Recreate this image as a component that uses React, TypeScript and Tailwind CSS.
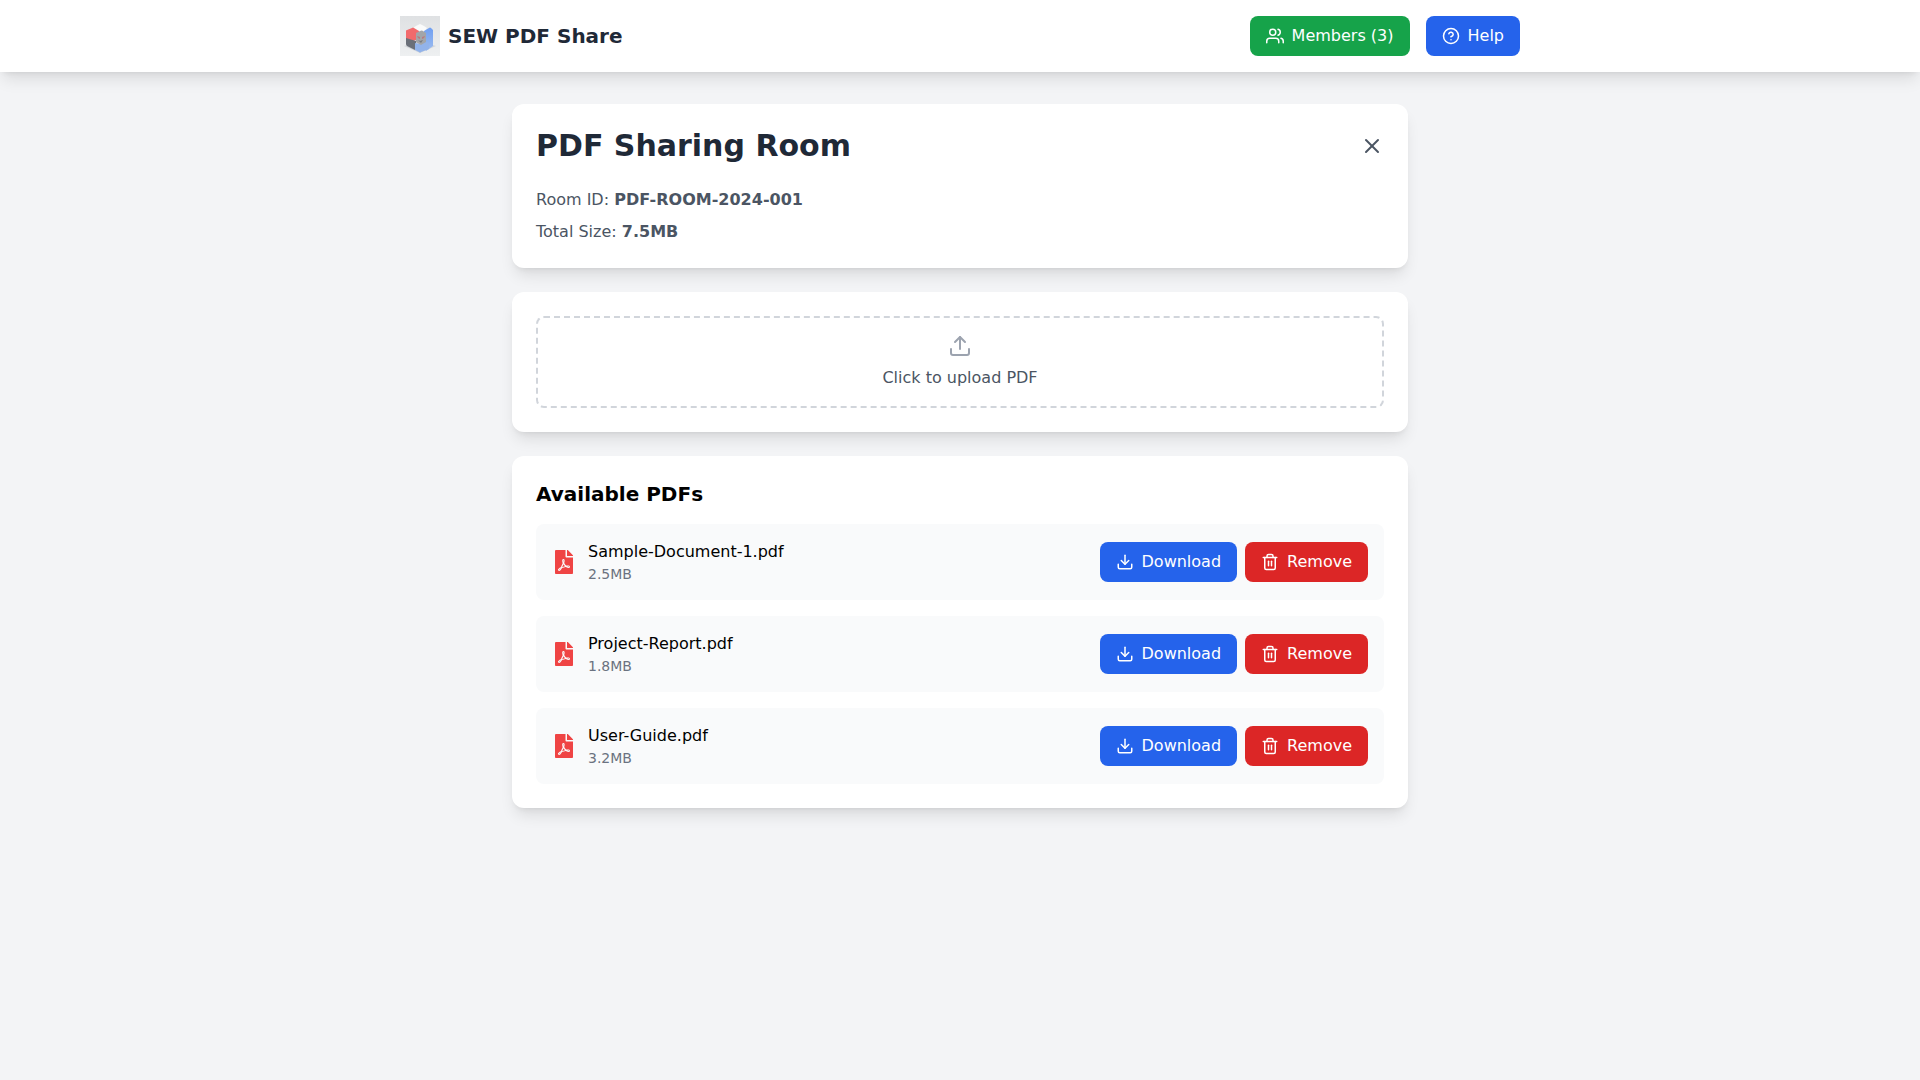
import { useRef } from "react";
import { FaFilePdf } from "react-icons/fa";
import {
  FiDownload,
  FiHelpCircle,
  FiTrash2,
  FiUpload,
  FiUsers,
  FiX,
} from "react-icons/fi";

const PDFS = [
  { name: "Sample-Document-1.pdf", size: "2.5MB" },
  { name: "Project-Report.pdf", size: "1.8MB" },
  { name: "User-Guide.pdf", size: "3.2MB" },
];

export default function App() {
  return (
    <div className="min-h-screen bg-[#f3f4f6] font-['DejaVu_Sans',sans-serif] text-base text-black">
      <Header />
      <main className="max-w-4xl mx-auto py-8 flex flex-col gap-6">
        <RoomInfo />
        <UploadBox />
        <PdfList />
      </main>
    </div>
  );
}

const Header = () => {
  return (
    <header className="bg-white shadow-lg">
      <div className="max-w-6xl mx-auto px-4 py-4 flex justify-between items-center">
        <div className="flex items-center gap-2">
          <Logo />
          <span className="text-xl font-bold text-[#1f2937]">SEW PDF Share</span>
        </div>
        <div className="flex items-center gap-4">
          <button className="flex items-center gap-2 px-4 py-2 rounded-lg bg-[#16a34a] text-white">
            <FiUsers size={18} />
            Members (3)
          </button>
          <button className="flex items-center gap-2 px-4 py-2 rounded-lg bg-[#2563eb] text-white">
            <FiHelpCircle size={18} />
            Help
          </button>
        </div>
      </div>
    </header>
  );
};

const RoomInfo = () => {
  return (
    <section className="bg-white rounded-xl shadow-lg p-6">
      <div className="flex justify-between items-center mb-6">
        <h1 className="text-3xl font-bold text-[#1f2937]">PDF Sharing Room</h1>
        <button aria-label="Close room" className="text-[#4b5563]">
          <FiX size={24} />
        </button>
      </div>
      <div className="space-y-2 text-[#4b5563]">
        <p>
          Room ID: <span className="font-bold">PDF-ROOM-2024-001</span>
        </p>
        <p>
          Total Size: <span className="font-bold">7.5MB</span>
        </p>
      </div>
    </section>
  );
};

const UploadBox = () => {
  const inputRef = useRef<HTMLInputElement>(null);

  return (
    <section className="bg-white rounded-xl shadow-lg p-6">
      <input
        ref={inputRef}
        type="file"
        accept=".pdf"
        aria-label="PDF file"
        className="hidden"
      />
      <button
        onClick={() => inputRef.current?.click()}
        className="w-full p-4 flex flex-col items-center gap-2 border-2 border-dashed border-[#d1d5db] rounded-lg"
      >
        <FiUpload size={24} className="text-[#9ca3af]" />
        <span className="text-[#4b5563]">Click to upload PDF</span>
      </button>
    </section>
  );
};

const PdfList = () => {
  return (
    <section className="bg-white rounded-xl shadow-lg p-6">
      <h2 className="text-xl font-bold mb-4">Available PDFs</h2>
      <ul className="space-y-4">
        {PDFS.map((pdf) => (
          <li
            key={pdf.name}
            className="flex justify-between items-center p-4 bg-[#f9fafb] rounded-lg"
          >
            <div className="flex items-center gap-3">
              <PdfIcon />
              <div>
                <p>{pdf.name}</p>
                <p className="text-sm text-[#6b7280]">{pdf.size}</p>
              </div>
            </div>
            <div className="flex gap-2">
              <button className="flex items-center gap-2 px-4 py-2 rounded-lg bg-[#2563eb] text-white">
                <FiDownload size={18} />
                Download
              </button>
              <button className="flex items-center gap-2 px-4 py-2 rounded-lg bg-[#dc2626] text-white">
                <FiTrash2 size={18} />
                Remove
              </button>
            </div>
          </li>
        ))}
      </ul>
    </section>
  );
};

const PdfIcon = () => {
  return <FaFilePdf size={24} className="text-[#ef4444]" />;
};

const Logo = () => {
  return (
    <svg viewBox="0 0 40 40" className="w-10 h-10" role="img" aria-label="SEW logo">
      <defs>
        <linearGradient id="logo-bg" x1="0" y1="0" x2="0" y2="1">
          <stop offset="0" stopColor="#dfe1e3" />
          <stop offset="1" stopColor="#eef0f1" />
        </linearGradient>
        <linearGradient id="logo-blue" x1="0" y1="0" x2="0" y2="1">
          <stop offset="0" stopColor="#6f9ff2" />
          <stop offset="1" stopColor="#9dbcee" />
        </linearGradient>
      </defs>
      <rect width="40" height="40" fill="url(#logo-bg)" />
      <path d="M4 30l16 7 16-7-16-5z" fill="#d3d6da" />
      <path d="M13 12l3-2 4-2 4 2 3 2-4 5h-6z" fill="#fafbfb" />
      <path d="M6 15q0-1 1-1l5-2q1-1 2 0l5 3v8l-6 2-7-2z" fill="#f26a6c" />
      <path d="M24 15l5-3q1-1 2 0l2 2v16l-7 5-3-8z" fill="url(#logo-blue)" />
      <path d="M6 22l10 3v8l-1 1-8-4q-1-1-1-2z" fill="#6b7079" />
      <path d="M15 27l5 1 6-2 3 1v6l-8 3q-1 1-2 0l-4-2z" fill="#92b3ea" />
      <path d="M16 17l4-2q2-1 3 0l3 2v9l-5 3-5-3z" fill="#a2a5a9" />
      <path d="M17 20l3 1v2l-2-1zM25 20l-3 1v2l2-1z" fill="#b8797e" />
      <path d="M18 24l2 1 3-1-2 3z" fill="#777b82" />
    </svg>
  );
};
